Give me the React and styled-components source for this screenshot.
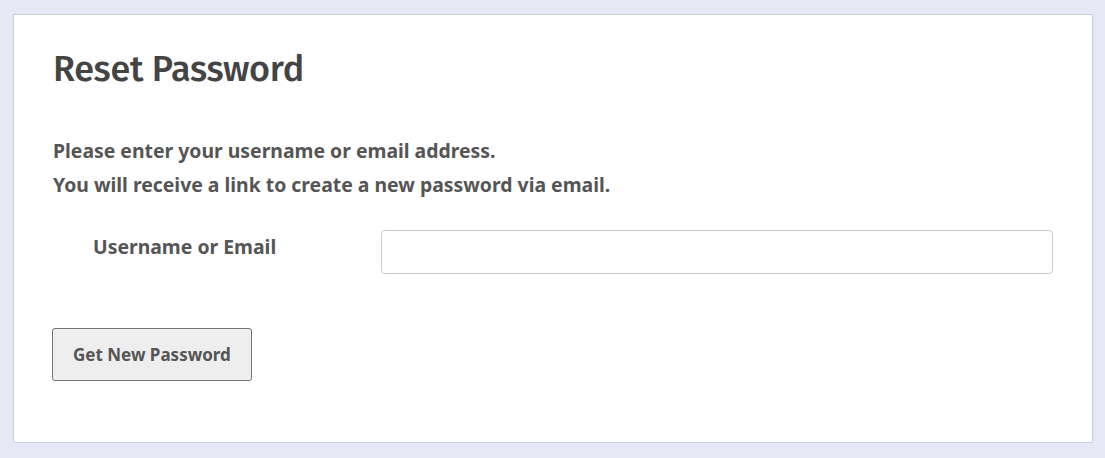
import React from "react";
import styled, { createGlobalStyle } from "styled-components";

const GlobalStyle = createGlobalStyle`
  html, body {
    margin: 0;
    background: #e6e9f5;
  }
  body {
    font-family: "Noto Sans", "Open Sans", sans-serif;
  }
`;

const Page = styled.div`
  padding: 14px 12px 14px 13px;
`;

const Card = styled.div`
  background: #fff;
  border: 1px solid #cfd0d4;
  padding: 32px 39px 60px 39px;
  height: 429px;
  box-sizing: border-box;
`;

const Title = styled.h1`
  margin: 0;
  font-family: "Fira Sans", "Noto Sans", sans-serif;
  font-size: 36px;
  font-weight: 500;
  color: #444;
  letter-spacing: -0.3px;
`;

const Intro = styled.p`
  margin: 43px 0 0;
  font-size: 19.4px;
  font-weight: 700;
  line-height: 34px;
  color: #555;
`;

const Field = styled.div`
  display: grid;
  grid-template-columns: 328px 1fr;
  align-items: start;
  margin-top: 28px;
`;

const Label = styled.label`
  padding: 3px 0 0 40px;
  font-size: 19.4px;
  font-weight: 700;
  color: #555;
`;

const Input = styled.input`
  height: 44px;
  box-sizing: border-box;
  border: 1px solid #ccc;
  border-radius: 4px;
  background: #fff;
  outline: none;
`;

const Button = styled.button`
  margin: 54px 0 0 -1px;
  height: 53px;
  padding: 0 20px;
  background: #eee;
  border: 1px solid #777;
  border-radius: 3px;
  font-family: "Noto Sans", sans-serif;
  font-size: 17px;
  font-weight: 700;
  color: #555;
  cursor: pointer;
`;

function App() {
  return (
    <Page>
      <GlobalStyle />
      <Card>
        <Title>Reset Password</Title>
        <Intro>
          Please enter your username or email address.
          <br />
          You will receive a link to create a new password via email.
        </Intro>
        <Field>
          <Label htmlFor="user_login">Username or Email</Label>
          <Input id="user_login" type="text" />
        </Field>
        <Button>Get New Password</Button>
      </Card>
    </Page>
  );
}

export default App;
